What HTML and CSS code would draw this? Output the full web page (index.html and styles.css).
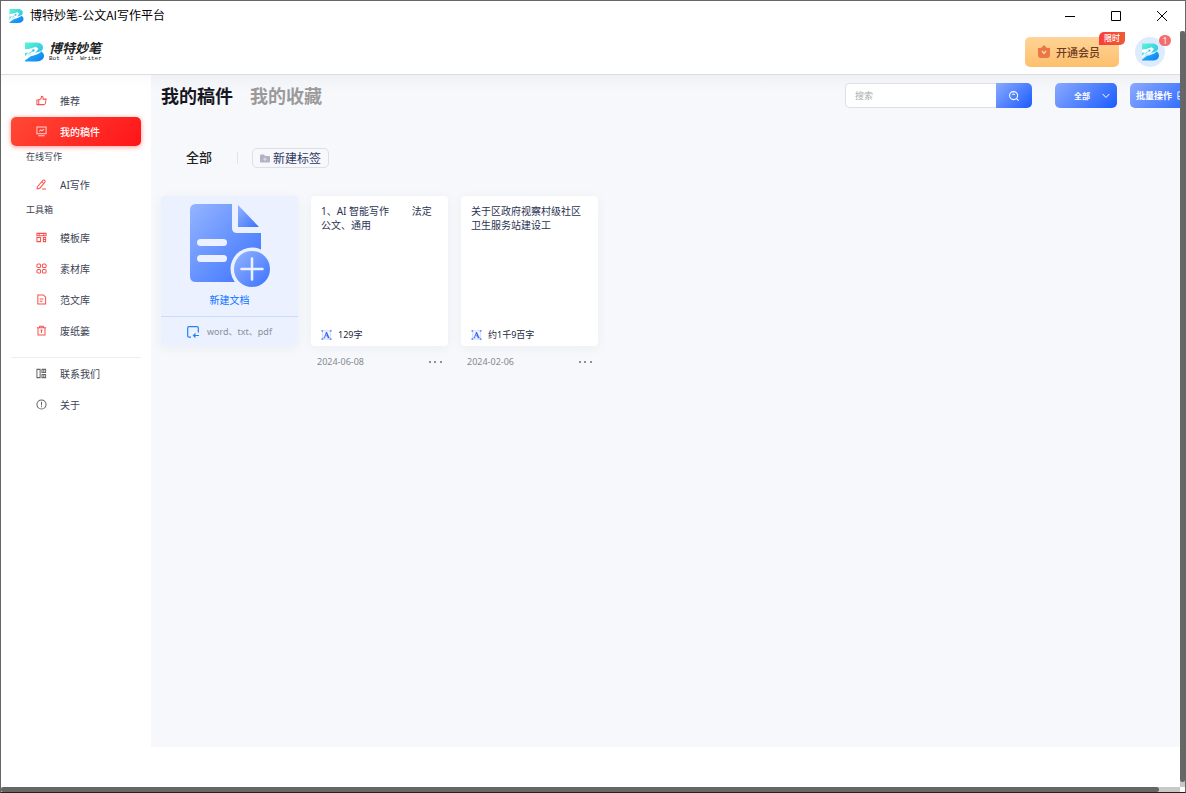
FILE: index.html
```html
<!DOCTYPE html>
<html lang="zh-CN">
<head>
<meta charset="utf-8">
<meta name="viewport" content="width=device-width, initial-scale=1">
<title>博特妙笔-公文AI写作平台</title>
<link rel="stylesheet" href="styles.css">
</head>
<body>
<svg class="defs" aria-hidden="true">
  <defs>
    <linearGradient id="teal" x1="0" y1="0" x2="1" y2="1"><stop offset="0" stop-color="#5ff5d2"/><stop offset="1" stop-color="#22b9ee"/></linearGradient>
    <linearGradient id="deep" x1="0" y1="0" x2="1" y2="1"><stop offset="0" stop-color="#35c8ee"/><stop offset="1" stop-color="#0a7cf8"/></linearGradient>
    <linearGradient id="doc" x1="0" y1="0" x2="1" y2="1"><stop offset="0" stop-color="#94b4ff"/><stop offset="1" stop-color="#3a72ff"/></linearGradient>
    <symbol id="logo" viewBox="0 0 20 20">
      <path d="M0 0H12C17 0 20 3 18.500 7C17.500 9 15 10 12 10.500L5 13L0 16Z" fill="url(#teal)"/>
      <path d="M18.500 4C20 11 12 13 6 14.500L0 19V20H12C17 20 20 17.500 20 14C20 11.500 18.500 10 16.500 9.500C18.500 8.500 19.500 6.500 18.500 4Z" fill="url(#deep)"/>
      <path d="M0 7L5 6.500L11.500 4.500L14 6.500L10.500 11.500L5 12.500L0 17V14.500L3.500 10.500L0 11Z" fill="#fff"/>
      <path d="M3.500 12L8 9" stroke="#3fd2e4" stroke-width=".9"/><circle cx="8.800" cy="8.300" r="1.300" fill="#2fc3e8"/>
    </symbol>
    <symbol id="count" viewBox="0 0 12 12">
      <rect x="1" y="1" width="10" height="10" fill="#f3f5ff" stroke="#c9d3fc" stroke-width=".8"/>
      <path d="M0 0H2V2H0ZM10 0H12V2H10ZM0 10H2V12H0ZM10 10H12V12H10Z" fill="#7190f8"/>
      <path d="M3.300 9.300L5.800 2.800M4.300 7H7.500M2.300 9.400H4.500M7.200 9.400H9.900" fill="none" stroke="#2b5cf5" stroke-width=".9"/>
      <path d="M5.800 2.800L8.600 9.300" fill="none" stroke="#2b5cf5" stroke-width="1.700"/>
    </symbol>
  </defs>
</svg>
<div class="window">
  <div class="titlebar">
    <svg class="title-logo"><use href="#logo"/></svg>
    <span class="title-text">博特妙笔-公文AI写作平台</span>
    <div class="win-controls">
      <button aria-label="最小化"><svg viewBox="0 0 12 12"><path d="M1 6.500H11"/></svg></button>
      <button aria-label="最大化"><svg viewBox="0 0 12 12"><path d="M1.500 1.500H10.500V10.500H1.500Z"/></svg></button>
      <button aria-label="关闭"><svg viewBox="0 0 12 12"><path d="M1 1L11 11M11 1L1 11"/></svg></button>
    </div>
  </div>
  <div class="viewport">
    <div class="page">
      <header class="header">
        <svg class="brand-logo"><use href="#logo"/></svg>
        <div class="brand"><span class="brand-name">博特妙笔</span><span class="brand-sub">Bot AI Writer</span></div>
        <div class="header-right">
          <button class="vip">
            <svg viewBox="0 0 12 13"><path d="M0 3H3L6 0L9 3H12V10Q12 13 9 13H3Q0 13 0 10Z" fill="#ea7746"/><path d="M4 6L6 8.500L8 6" fill="none" stroke="#ffdca3" stroke-width="1.300"/></svg>
            开通会员<span class="vip-tag">限时</span>
          </button>
          <a class="avatar" href="#" aria-label="账户"><svg><use href="#logo"/></svg><span class="badge">1</span></a>
        </div>
      </header>
      <div class="body">
        <nav class="sidebar">
          <a class="item" href="#"><svg viewBox="0 0 12 12"><path d="M1 5.500H3V10.500H1ZM3 5.500L5.500 4L6 1.500Q8 1 7.700 4.500H11L10.300 9Q10 10.500 8.500 10.500H3"/></svg>推荐</a>
          <a class="item active" href="#"><svg viewBox="0 0 12 12"><path d="M1 1H11V8.500H1ZM2.500 10.700H9.500M3.500 6L5.200 4.300L6.500 5.300L8.700 3.300"/></svg>我的稿件</a>
          <h3 class="group">在线写作</h3>
          <a class="item" href="#"><svg viewBox="0 0 12 12"><path d="M1.500 8.500L7.500 1.500Q9 .7 9.800 2Q10.300 3 9.500 3.800L4 10.300L1.200 10.800ZM6.500 3L8.500 5M6.500 10.800H11"/></svg>AI写作</a>
          <h3 class="group">工具箱</h3>
          <a class="item" href="#"><svg viewBox="0 0 12 12"><path d="M1 1.500H11V4H1ZM1 6H5V10.500H1ZM7.500 6H11M7.500 8.200H11M7.500 10.500H11M3.500 1.500V4M8.500 1.500V4M8 6V10.500M10.500 6V10.500"/></svg>模板库</a>
          <a class="item" href="#"><svg viewBox="0 0 12 12"><rect x="1" y="1" width="4" height="4" rx="1.300"/><rect x="7" y="1" width="4" height="4" rx="1.300"/><rect x="1" y="7" width="4" height="4" rx="1.300"/><rect x="7" y="7" width="4" height="4" rx="1.300"/></svg>素材库</a>
          <a class="item" href="#"><svg viewBox="0 0 12 12"><path d="M2 1H8L10.500 3.500V11H2ZM4 5.500H8M4 8H7"/></svg>范文库</a>
          <a class="item" href="#"><svg viewBox="0 0 12 12"><path d="M1 3H11M2.200 3V11H9.800V3M4 3V1.300H8V3M6 5V8.800M5 5.500H7"/></svg>废纸篓</a>
          <hr class="rule">
          <a class="item grey" href="#"><svg viewBox="0 0 12 12"><path d="M1 1.500H4.500V10.500H1ZM6.500 1.500H10.500V5H6.500ZM6.500 7H10.500V10.500H6.500ZM8.500 1.500V5M8.500 7V10.500"/></svg>联系我们</a>
          <a class="item grey" href="#"><svg viewBox="0 0 12 12"><circle cx="6" cy="6" r="5"/><path d="M6 3V7M6 8V9"/></svg>关于</a>
        </nav>
        <main class="main">
          <div class="toolbar">
            <h1 class="tab current">我的稿件</h1>
            <h2 class="tab">我的收藏</h2>
            <div class="tools">
              <form class="search">
                <input type="text" placeholder="搜索" aria-label="搜索">
                <button type="button" aria-label="查找"><svg viewBox="0 0 12 12"><circle cx="5.500" cy="5.500" r="4.800"/><path d="M8.800 8.800L11.500 11.500M4 4.300Q5.500 3 7 4.300"/></svg></button>
              </form>
              <div class="filter">
                <select aria-label="筛选"><option>全部</option></select>
                <svg viewBox="0 0 8 6"><path d="M.7 1L4 4.500L7.300 1"/></svg>
              </div>
              <button class="batch"><span>批量操作</span><svg viewBox="0 0 10 10"><path d="M1 1H9V9H1ZM1 6H9"/></svg></button>
            </div>
          </div>
          <div class="tags">
            <a class="all" href="#">全部</a>
            <span class="bar"></span>
            <button class="new-tag"><svg viewBox="0 0 10 9"><path d="M0 1.500Q0 .5 1 .5H4L5 2H9Q10 2 10 3V7.500Q10 8.500 9 8.500H1Q0 8.500 0 7.500Z" fill="#b1b2c3"/><path d="M5 3.500V7M3.300 5.200H6.700" stroke="#e8e9f2" stroke-width=".8"/></svg>新建标签</button>
          </div>
          <div class="cards">
            <section class="card create">
              <a class="create-link" href="#">
                <svg viewBox="0 0 82 84">
                  <path d="M7 0H43V24Q43 29 48 29H72V78H7Q1 78 1 72V6Q1 0 7 0Z" fill="url(#doc)"/>
                  <path d="M49 1L70 23H49Z" fill="url(#doc)"/>
                  <rect x="8" y="35" width="30" height="7" rx="3.500" fill="#ebf1ff"/>
                  <rect x="8" y="51" width="30" height="7" rx="3.500" fill="#ebf1ff"/>
                  <circle cx="63" cy="65" r="21.500" fill="#ebf1ff"/>
                  <circle cx="63" cy="65" r="18" fill="url(#doc)"/>
                  <path d="M63 54.500V75.500M52.500 65H73.500" stroke="#ebf1ff" stroke-width="2.500" stroke-linecap="round"/>
                </svg>
                新建文档
              </a>
              <a class="import" href="#"><svg viewBox="0 0 12 12"><path d="M4 11.200H2Q.7 11.200 .7 10V2Q.7 .7 2 .7H10Q11.300 .7 11.300 2V6.500M6.500 9.500H12M8.500 7.500L6.500 9.500L8.500 11.500"/></svg>word、txt、pdf</a>
            </section>
            <article class="doc">
              <div class="card"><p class="text">1、AI 智能写作　　 法定公文、通用</p><div class="words"><svg><use href="#count"/></svg>129字</div></div>
              <div class="meta"><time>2024-06-08</time><button class="more" aria-label="更多"><svg viewBox="0 0 13 2"><path d="M0 0H2V2H0ZM5 0H7V2H5ZM11 0H13V2H11Z"/></svg></button></div>
            </article>
            <article class="doc">
              <div class="card"><p class="text">关于区政府视察村级社区卫生服务站建设工</p><div class="words"><svg><use href="#count"/></svg>约1千9百字</div></div>
              <div class="meta"><time>2024-02-06</time><button class="more" aria-label="更多"><svg viewBox="0 0 13 2"><path d="M0 0H2V2H0ZM5 0H7V2H5ZM11 0H13V2H11Z"/></svg></button></div>
            </article>
          </div>
        </main>
      </div>
    </div>
    <div class="vscroll"><div class="vthumb"></div></div>
  </div>
  <div class="hscroll"><div class="hthumb"></div></div>
</div>
</body>
</html>
```

FILE: styles.css
```css
* { box-sizing: border-box; }
body, h1, h2, h3, p { margin: 0; }
body {
  font-family: "Noto Sans", "Noto Sans CJK SC", sans-serif;
  font-size: 10px;
  color: #3c4353;
  background: #fff;
}
a { color: inherit; text-decoration: none; }
button, input, select { font: inherit; color: inherit; border: 0; padding: 0; background: none; }
svg { flex: none; overflow: visible; }
.defs { position: absolute; width: 0; height: 0; }

.window {
  height: 100vh;
  display: flex;
  flex-direction: column;
  border: 1px solid #666;
  border-bottom-color: #222;
  overflow: hidden;
}
.titlebar { height: 30px; flex: none; display: flex; align-items: center; padding-left: 8px; }
.title-logo { width: 15px; height: 14px; margin-right: 6px; }
.title-text { padding-bottom: 2px; font-family: "Noto Sans CJK SC", sans-serif; font-size: 12px; line-height: 18px; color: #000; }
.win-controls { margin-left: auto; display: flex; }
.win-controls button { width: 46px; height: 30px; display: flex; align-items: center; justify-content: center; }
.win-controls svg { width: 12px; height: 12px; fill: none; stroke: #000; stroke-width: 1; }

.viewport { flex: 1; min-height: 0; display: flex; }
.page { flex: 1; min-width: 0; display: flex; flex-direction: column; padding-bottom: 40px; }
.vscroll { width: 5px; background: #c9c9c9; }
.vthumb { height: calc(100% - 5px); background: #666; border-radius: 3px; }
.hscroll { height: 5px; flex: none; margin-right: 5px; background: #c9c9c9; }
.hthumb { height: 5px; width: calc(100% - 21px); background: #666; border-radius: 3px; }

.header { height: 44px; flex: none; display: flex; align-items: center; padding: 0 15px 2px 24px; border-bottom: 1px solid #dcdee2; }
.brand-logo { width: 19px; height: 20px; margin-right: 5px; }
.brand { display: flex; flex-direction: column; color: #222; }
.brand-name { font-size: 13px; line-height: 14px; font-weight: 700; font-style: italic; }
.brand-sub { font-family: "Liberation Mono", monospace; font-size: 6px; line-height: 7px; word-spacing: 3px; }
.header-right { margin-left: auto; display: flex; align-items: center; gap: 16px; }
.vip {
  position: relative;
  width: 94px;
  height: 30px;
  display: flex;
  align-items: center;
  justify-content: center;
  gap: 6px;
  font-size: 11px;
  font-weight: 500;
  color: #6f3a24;
  border-radius: 5px;
  background: linear-gradient(#ffd497, #fdbf6c);
}
.vip svg { width: 12px; height: 13px; }
.vip-tag {
  position: absolute;
  top: -5px;
  right: -6px;
  width: 26px;
  height: 13px;
  font-size: 8px;
  line-height: 12px;
  color: #fff;
  border-radius: 5px 0 5px 0;
  background: linear-gradient(90deg, #fa3e3b, #f05a34);
}
.avatar { position: relative; width: 30px; height: 30px; display: flex; align-items: center; justify-content: center; border-radius: 50%; background: #dcebfd; }
.avatar svg { width: 17px; height: 18px; }
.badge { position: absolute; top: -2px; right: -6px; width: 12px; height: 11px; border-radius: 6px; background: #f56c6c; color: #fff; font-size: 8px; line-height: 11px; text-align: center; }

.body { flex: 1; min-height: 0; display: flex; }
.sidebar { width: 150px; flex: none; padding: 10px 10px 0; background: linear-gradient(#fafafb, #fff 12px); }
.item { height: 31px; display: flex; align-items: center; gap: 13px; padding-left: 25px; font-size: 10px; }
.item svg { width: 11px; height: 11px; fill: none; stroke: #f8504c; stroke-width: 1.1; }
.item.active { height: 29px; margin: 1px 0; color: #fff; font-weight: 500; border-radius: 5px; background: linear-gradient(135deg, #ff4a35, #ff1419); box-shadow: 0 1px 5px #ff2d2d80; }
.item.active svg { stroke: #ffd6d2; }
.item.grey svg { stroke: #666; }
.group { height: 21px; padding-left: 15px; font-size: 9px; line-height: 20px; font-weight: 400; }
.group + .item { height: 32px; }
.rule { margin: 11px 0 0; border: 0; border-top: 1px solid #eceef0; }

.main { flex: 1; min-width: 0; padding: 8px 0 0 10px; background: linear-gradient(#f0f1f4, #f6f8fb 16px); overflow: hidden; }
.toolbar { display: flex; align-items: flex-start; height: 26px; gap: 17px; }
.tab { font-size: 18px; line-height: 26px; font-weight: 700; color: #9a9a9a; white-space: nowrap; }
.tab.current { color: #17171f; }
.tools { margin: 0 -24px 0 auto; display: flex; align-items: center; height: 25px; }
.search { display: flex; width: 187px; height: 25px; margin-right: 23px; }
.search input { flex: 1; min-width: 0; padding: 0 9px; font-size: 9px; background: #fff; border: 1px solid #dcdfe6; border-right: 0; border-radius: 5px 0 0 5px; outline: 0; }
.search input::placeholder { color: #a8abb2; }
.search button { width: 36px; display: flex; align-items: center; justify-content: center; border-radius: 0 5px 5px 0; background: linear-gradient(135deg, #8baaff, #1a5cff); }
.search svg { width: 10px; height: 10px; fill: none; stroke: #fff; stroke-width: 1.3; }
.filter { position: relative; width: 62px; height: 25px; margin-right: 13px; border-radius: 5px; background: linear-gradient(135deg, #8baaff, #1a5cff); }
.filter select { width: 100%; height: 100%; padding-left: 19px; appearance: none; font-size: 8px; font-weight: 700; color: #fff; }
.filter svg { position: absolute; right: 7px; top: 10px; width: 8px; height: 6px; fill: none; stroke: #fff; pointer-events: none; }
.batch { width: 74px; height: 25px; display: flex; align-items: center; gap: 5px; padding-left: 6px; font-size: 9px; font-weight: 700; color: #fff; border-radius: 5px; background: linear-gradient(135deg, #8baaff, #1a5cff); }
.batch svg { width: 9px; height: 9px; fill: none; stroke: #fff; }

.tags { display: flex; align-items: center; height: 20px; margin: 39px 0 28px; padding-left: 25px; }
.all { padding-bottom: 2px; font-size: 13px; line-height: 18px; font-weight: 500; color: #222; }
.bar { width: 1px; height: 12px; margin: 0 14px 0 25px; background: #dfe4f0; }
.new-tag { height: 20px; display: flex; align-items: center; gap: 3px; padding: 1px 7px 0; font-size: 12px; line-height: 18px; color: #2f3763; border: 1px solid #dcdfe6; border-radius: 5px; }
.new-tag svg { width: 10px; height: 9px; }

.cards { display: flex; align-items: flex-start; gap: 13px; }
.card { width: 137px; height: 150px; display: flex; flex-direction: column; border-radius: 4px; background: #fff; box-shadow: 0 2px 12px #2a3b5a0d; }
.create { background: #ebf1ff; }
.create-link { height: 121px; display: flex; flex-direction: column; align-items: center; gap: 4px; padding-top: 8px; font-size: 10px; line-height: 16px; color: #0b73ff; border-bottom: 1px solid #cbdafb; }
.create-link svg { width: 82px; height: 84px; }
.import { flex: 1; display: flex; align-items: center; justify-content: center; gap: 8px; font-size: 9px; color: #8c8f99; }
.import svg { width: 12px; height: 12px; fill: none; stroke: #2480f8; stroke-width: 1.2; }
.text { padding: 8px 10px 0; font-size: 10px; line-height: 14px; color: #2b3352; }
.words { margin-top: auto; display: flex; align-items: center; gap: 6px; padding: 0 10px 4px; font-size: 9px; line-height: 14px; color: #22283f; }
.words svg { width: 11px; height: 10px; }
.meta { display: flex; align-items: center; justify-content: space-between; height: 14px; margin-top: 9px; padding: 0 6px; font-size: 9px; line-height: 14px; color: #858993; }
.more { display: flex; height: 14px; align-items: center; }
.more svg { width: 13px; height: 2px; fill: #8d90a5; }
```
